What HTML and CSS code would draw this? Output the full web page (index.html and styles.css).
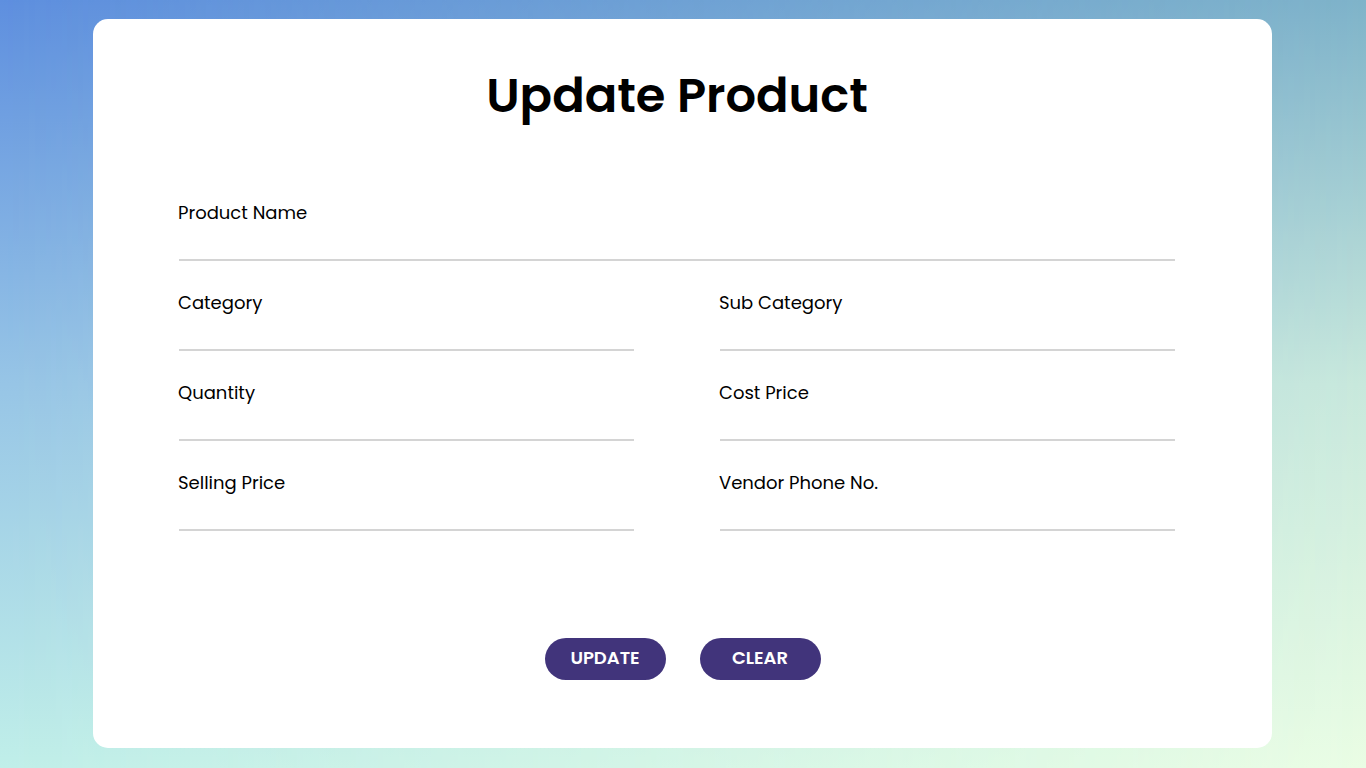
FILE: index.html
```html
<!DOCTYPE html>
<html lang="en">
<head>
<meta charset="utf-8">
<title>Update Product</title>
<link rel="stylesheet" href="styles.css">
</head>
<body>
<div class="card">
  <div class="content">
    <h1 class="title">Update Product</h1>
    <div class="form">
      <div class="field full">
        <label class="label">Product Name</label>
        <input class="input" type="text">
      </div>
      <div class="field">
        <label class="label">Category</label>
        <input class="input" type="text">
      </div>
      <div class="field">
        <label class="label">Sub Category</label>
        <input class="input" type="text">
      </div>
      <div class="field">
        <label class="label">Quantity</label>
        <input class="input" type="text">
      </div>
      <div class="field">
        <label class="label">Cost Price</label>
        <input class="input" type="text">
      </div>
      <div class="field">
        <label class="label">Selling Price</label>
        <input class="input" type="text">
      </div>
      <div class="field">
        <label class="label">Vendor Phone No.</label>
        <input class="input" type="text">
      </div>
    </div>
  </div>
  <div class="actions">
    <button class="btn">UPDATE</button>
    <button class="btn">CLEAR</button>
  </div>
</div>
</body>
</html>
```
FILE: styles.css
```css
* { box-sizing: border-box; }
html, body { height: 100%; }
body {
  margin: 0;
  padding: 19px 94px 20px 93px;
  font-family: "Poppins", "Inter", "Liberation Sans", sans-serif;
  background: linear-gradient(to bottom, #5e8fdf 0%, #97c5e6 50%, #c0efe9 100%);
  position: relative;
  overflow: hidden;
}
body::before {
  content: "";
  position: absolute;
  inset: 0;
  background: linear-gradient(to bottom, #7fb3c9 0%, #c8e8dc 50%, #eafde4 100%);
  -webkit-mask-image: linear-gradient(to right, transparent 0%, #000 100%);
  mask-image: linear-gradient(to right, transparent 0%, #000 100%);
  z-index: 0;
}
.card {
  position: relative;
  z-index: 1;
  width: 1179px;
  height: 729px;
  background: #fff;
  border-radius: 15px;
  padding: 46px 0 0;
  display: flex;
  flex-direction: column;
}
.content {
  margin-left: 86px;
  width: 996px;
}
.title {
  margin: 0;
  text-align: center;
  font-size: 48px;
  line-height: 62px;
  font-weight: 600;
  color: #000;
  letter-spacing: 0;
}
.form {
  margin-top: 44px;
  display: grid;
  grid-template-columns: 455px 455px;
  column-gap: 86px;
}
.field {
  display: flex;
  flex-direction: column;
  padding-top: 29px;
  height: 90px;
}
.field.full { grid-column: 1 / -1; }
.label {
  font-size: 18px;
  line-height: 26px;
  height: 26px;
  color: #000;
  margin-left: -1px;
}
.input {
  height: 35px;
  border: 0;
  border-bottom: 2px solid #d4d4d4;
  outline: none;
  background: transparent;
  padding: 0;
  margin: 0;
  font: inherit;
}
.actions {
  margin-top: 107px;
  display: flex;
  justify-content: center;
  gap: 34px;
}
.btn {
  width: 121px;
  height: 42px;
  border: 0;
  border-radius: 21px;
  background: #41347b;
  color: #fff;
  font-family: inherit;
  font-size: 18px;
  line-height: 24px;
  font-weight: 600;
  padding: 0 0 3px;
  cursor: pointer;
}
```
